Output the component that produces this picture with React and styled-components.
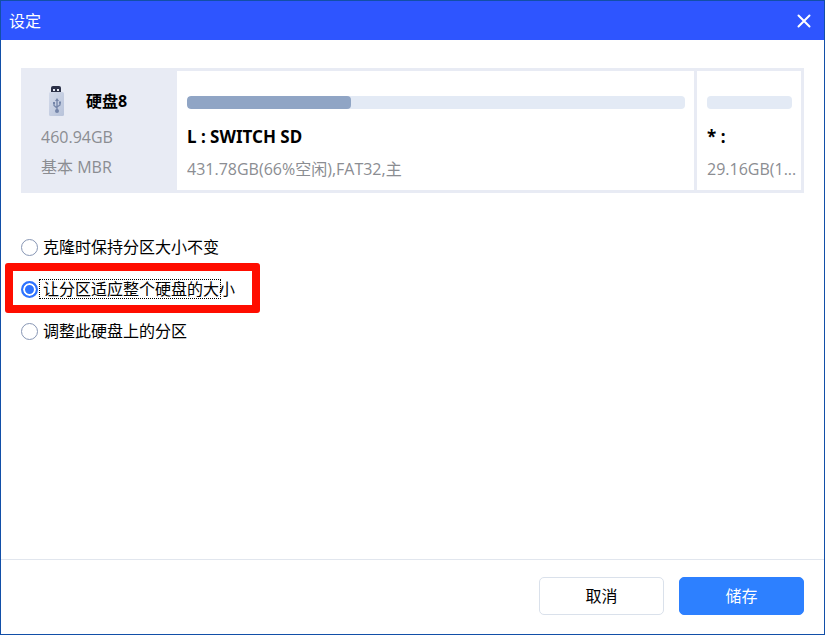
/* eslint-disable react/prop-types */
import { useState } from "react"
import styled, { createGlobalStyle } from "styled-components"

const GlobalStyle = createGlobalStyle`
  *,
  *::before,
  *::after {
    box-sizing: border-box;
  }

  body {
    margin: 0;
    background: #fff;
    color: #000;
    font-family: "Open Sans", "Noto Sans CJK SC", sans-serif;
    font-size: 16px;
    line-height: 24px;
  }

  button,
  input {
    margin: 0;
    font: inherit;
  }
`

const Window = styled.div`
  display: flex;
  flex-direction: column;
  min-height: 100vh;
  border: 1px solid #124fa8;
`

const TitleBar = styled.header`
  display: flex;
  align-items: center;
  justify-content: space-between;
  height: 39px;
  padding: 0 12px 0 8px;
  background: #2e55ff;
  color: #fff;
`

const Title = styled.h1`
  margin: 0;
  font-size: 16px;
  font-weight: 400;
`

const CloseButton = styled.button`
  display: flex;
  padding: 0;
  border: none;
  background: none;
  color: #fff;
`

const Body = styled.main`
  flex: 1;
  padding: 28px 20px;
`

const DiskPanel = styled.section`
  display: grid;
  grid-template-columns: 150px minmax(0, 1fr) 104px;
  gap: 3px;
  padding: 3px;
  background: #e8ebf4;
`

const DiskInfo = styled.div`
  display: flex;
  flex-direction: column;
  gap: 6px;
  padding: 12px 0 8px 17px;
`

const DiskHeading = styled.div`
  display: flex;
  align-items: center;
  gap: 20px;
  height: 36px;
  padding-left: 7px;
`

const DiskName = styled.h2`
  margin: 0;
  font-size: 16px;
  font-weight: 700;
`

const Muted = styled.p`
  margin: 0;
  overflow: hidden;
  color: #8b8d92;
  font-size: 16px;
  white-space: nowrap;
`

const Partition = styled.div`
  padding: 25px 4px 9px 10px;
  background: #fff;
`

const UsageBar = styled.div`
  height: 13px;
  margin-right: 5px;
  overflow: hidden;
  border-radius: 4px;
  background: #e3eaf5;
`

const UsageFill = styled.div`
  height: 100%;
  border-radius: 4px;
  background: #90a5c5;
`

const PartitionName = styled.h3`
  margin: 16px 0 8px;
  font-family: "Noto Sans", "Noto Sans CJK SC", sans-serif;
  font-size: 17px;
  font-weight: 700;
`

const Options = styled.fieldset`
  margin: 33px 0 0;
  padding: 0;
  border: none;
`

const OptionRow = styled.div`
  display: flex;
  align-items: center;
  height: 42px;
`

const Option = styled.label`
  position: relative;
  display: flex;
  align-items: center;
  gap: 5px;
`

const Radio = styled.input`
  appearance: none;
  width: 17px;
  height: 17px;
  border: 1px solid #8796b4;
  border-radius: 50%;
  background: #fff;

  &:checked {
    border: 2px solid #2e73ff;
    background: #2e73ff;
    box-shadow: inset 0 0 0 2px #fff;
  }

  &:focus {
    outline: none;
  }
`

const FocusMark = styled.span`
  position: absolute;
  inset: 2px 14px 2px 18px;
  border: 1px dotted #000;
`

const Highlight = styled.span`
  position: absolute;
  inset: -14px -25px -12px -16px;
  border: 8px solid #ff0d00;
  border-radius: 3px;
  pointer-events: none;
`

const Footer = styled.footer`
  display: flex;
  justify-content: flex-end;
  gap: 15px;
  padding: 17px 20px 19px;
  border-top: 1px solid #e1e6ee;
`

const Button = styled.button`
  width: 125px;
  height: 38px;
  padding: 0;
  border: 1px solid ${({ $primary }) => ($primary ? "#2d80ff" : "#dae1eb")};
  border-radius: 5px;
  background: ${({ $primary }) => ($primary ? "#2d80ff" : "#fff")};
  color: ${({ $primary }) => ($primary ? "#fff" : "#000")};
`

const partitions = [
  {
    name: "L : SWITCH SD",
    details: "431.78GB(66%空闲),FAT32,主",
    used: 33,
  },
  { name: "* :", details: "29.16GB(1...", used: 0 },
]

const options = [
  { id: "keep", label: "克隆时保持分区大小不变" },
  { id: "fit", label: "让分区适应整个硬盘的大小", highlighted: true },
  { id: "edit", label: "调整此硬盘上的分区" },
]

function CloseIcon() {
  return (
    <svg width="16" height="16" viewBox="0 0 16 16" aria-hidden="true">
      <path
        d="M2.5 2.5l11 11M13.5 2.5l-11 11"
        stroke="currentColor"
        strokeWidth="2"
        strokeLinecap="round"
      />
    </svg>
  )
}

function UsbIcon() {
  return (
    <svg width="18" height="32" viewBox="0 0 18 32" aria-hidden="true">
      <defs>
        <linearGradient id="usbBody" x1="0" y1="0" x2="1" y2="1">
          <stop offset="0" stopColor="#d3daea" />
          <stop offset="1" stopColor="#b8c3da" />
        </linearGradient>
      </defs>
      <path d="M3 8V3q0-2 2-2h6q2 0 2 2v5z" fill="#2c3148" />
      <path d="M5 4h2v2H5zM9 4h2v2H9z" fill="#e8ebf4" />
      <rect x="1" y="7" width="15" height="24" rx="1.5" fill="url(#usbBody)" />
      <g fill="none" stroke="#7485a9" strokeWidth="1.3">
        <path d="M9 15v10M6 18v2.5l3 2.5M12 17v3l-3 2" />
      </g>
      <path
        d="M9 13l2 3H7zM5 17h2v2H5zM11 16.5h2v2h-2z"
        fill="#7485a9"
      />
      <circle cx="9" cy="26" r="2" fill="#7485a9" />
    </svg>
  )
}

function App() {
  const [selected, setSelected] = useState("fit")

  return (
    <>
      <GlobalStyle />
      <Window>
        <TitleBar>
          <Title>设定</Title>
          <CloseButton type="button" aria-label="关闭">
            <CloseIcon />
          </CloseButton>
        </TitleBar>

        <Body>
          <DiskPanel>
            <DiskInfo>
              <DiskHeading>
                <UsbIcon />
                <DiskName>硬盘8</DiskName>
              </DiskHeading>
              <Muted>460.94GB</Muted>
              <Muted>基本 MBR</Muted>
            </DiskInfo>
            {partitions.map(({ name, details, used }) => (
              <Partition key={name}>
                <UsageBar>
                  <UsageFill style={{ width: `${used}%` }} />
                </UsageBar>
                <PartitionName>{name}</PartitionName>
                <Muted>{details}</Muted>
              </Partition>
            ))}
          </DiskPanel>

          <Options aria-label="分区选项">
            {options.map(({ id, label, highlighted }) => (
              <OptionRow key={id}>
                <Option>
                  <Radio
                    type="radio"
                    name="layout"
                    value={id}
                    checked={selected === id}
                    onChange={() => setSelected(id)}
                  />
                  {label}
                  {selected === id && <FocusMark />}
                  {highlighted && <Highlight />}
                </Option>
              </OptionRow>
            ))}
          </Options>
        </Body>

        <Footer>
          <Button type="button">取消</Button>
          <Button type="button" $primary>
            储存
          </Button>
        </Footer>
      </Window>
    </>
  )
}

export default App
